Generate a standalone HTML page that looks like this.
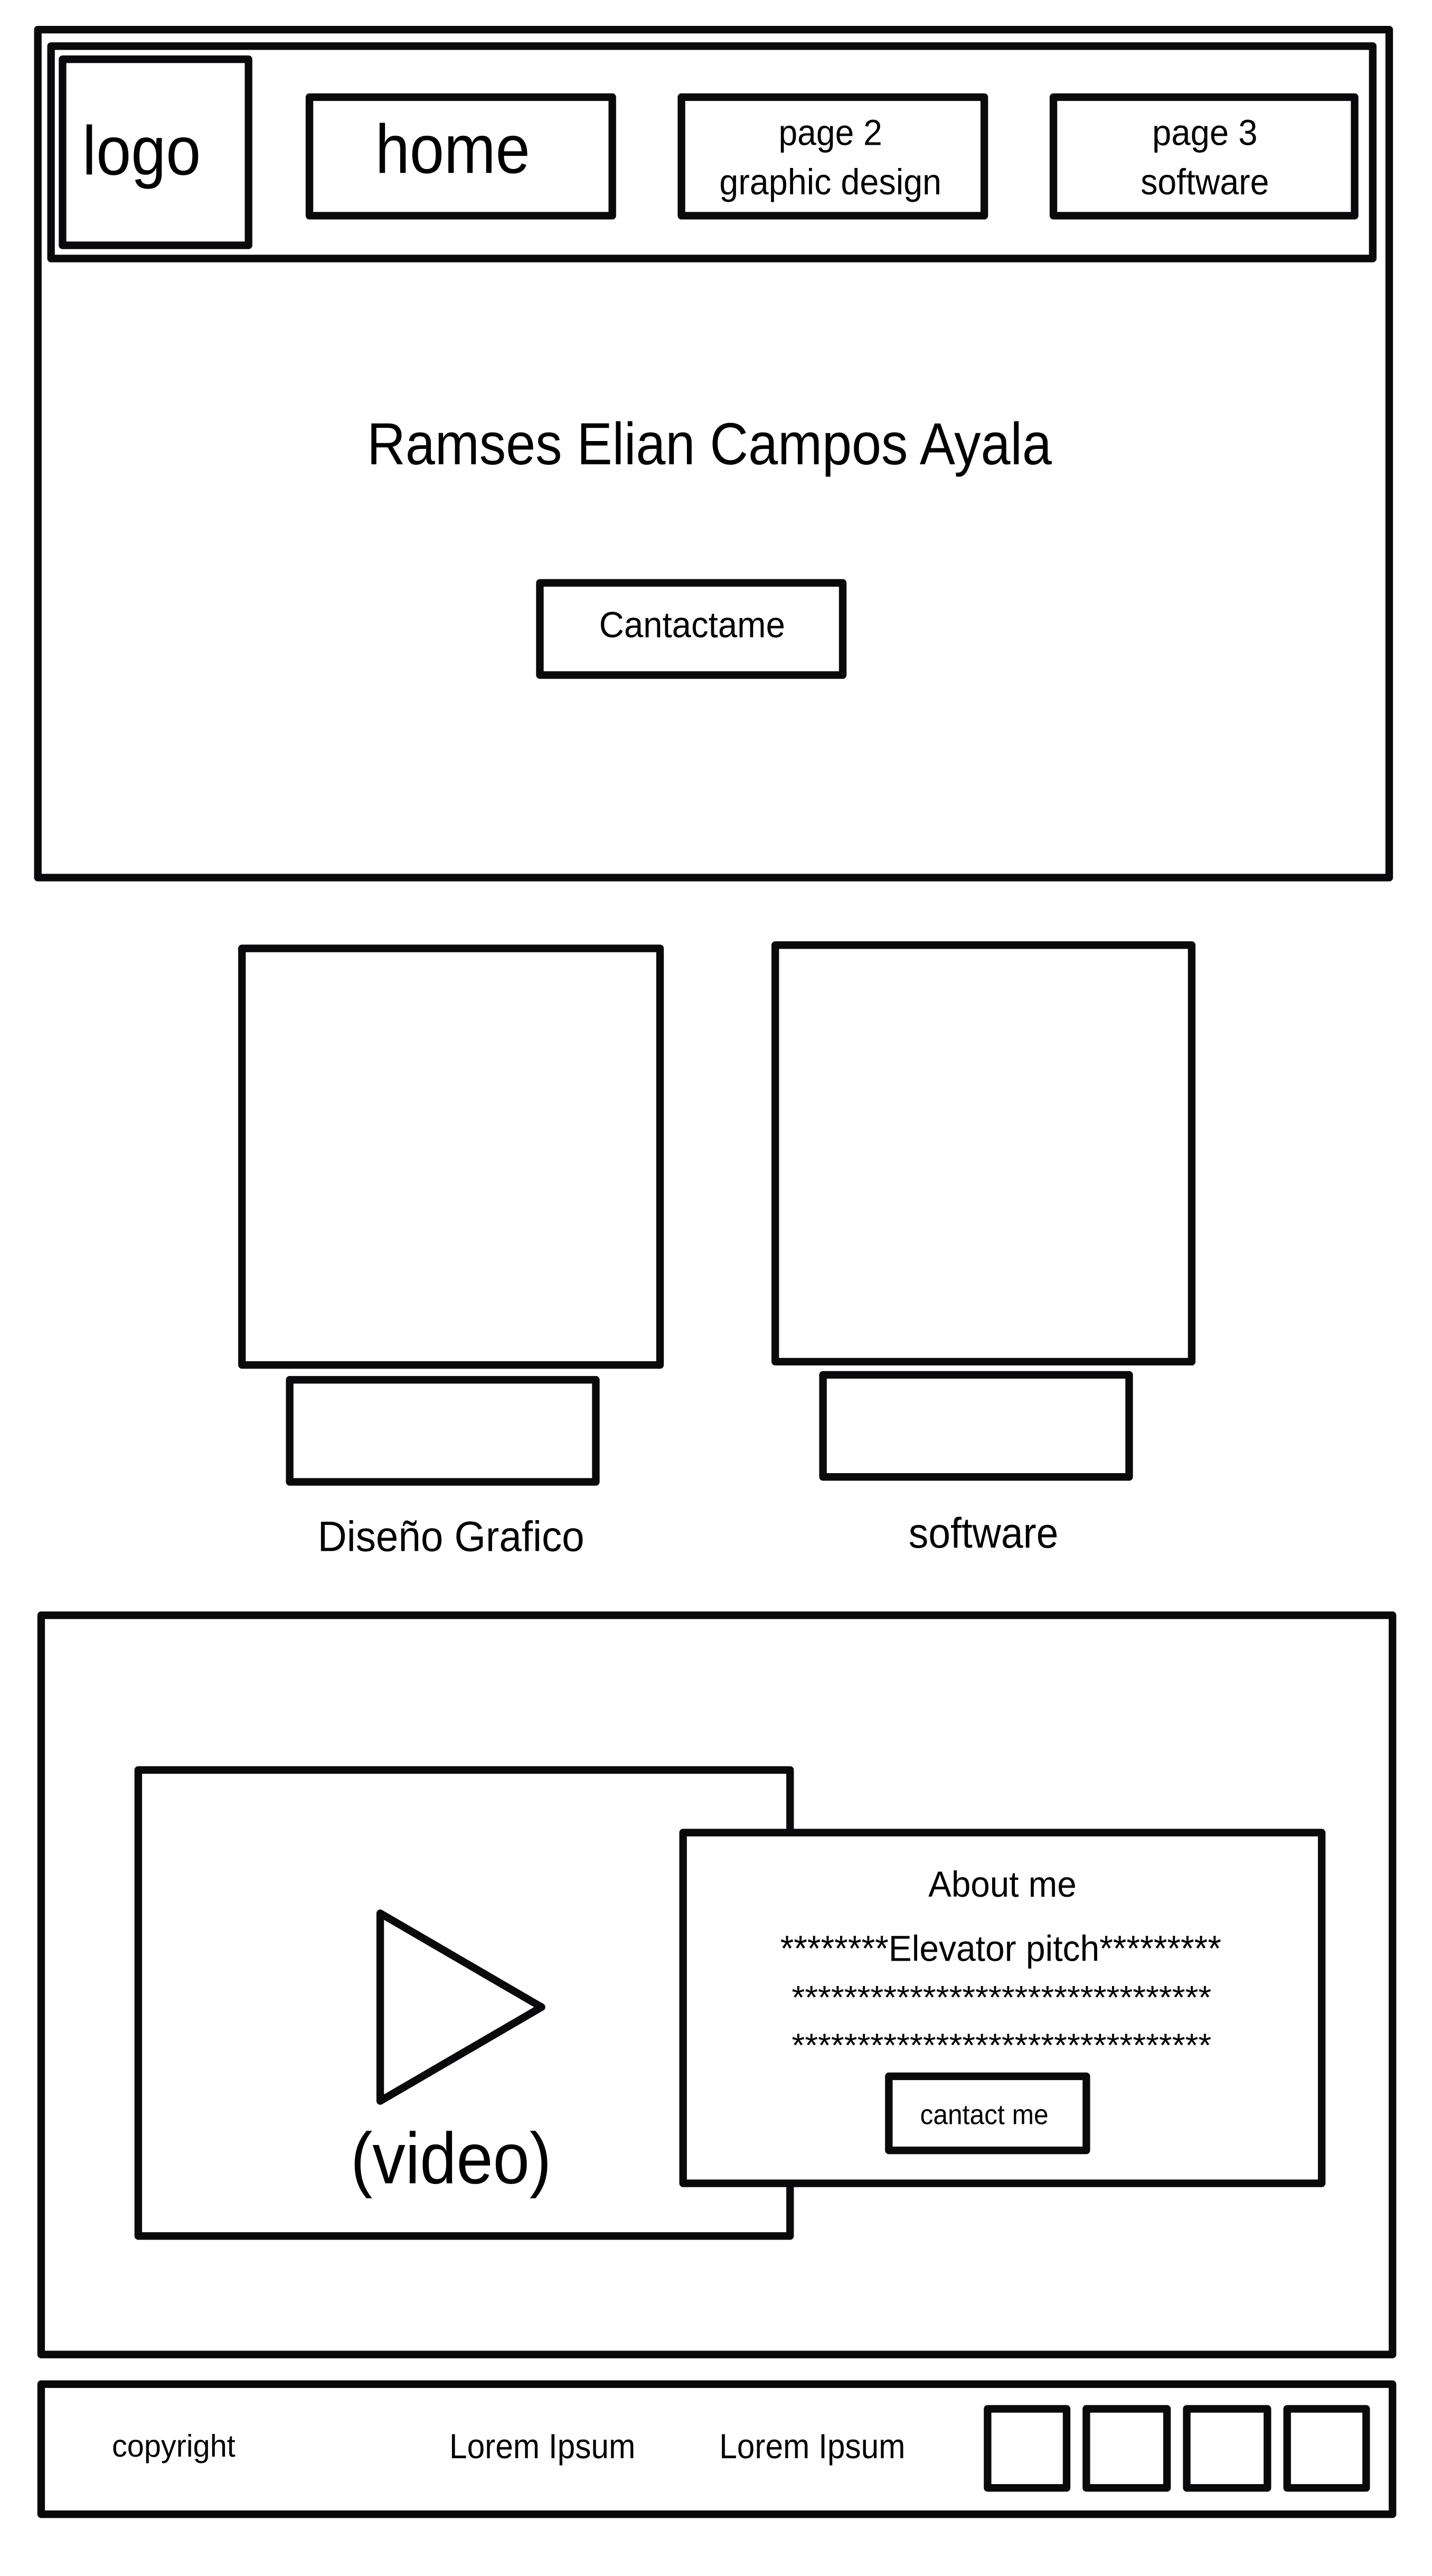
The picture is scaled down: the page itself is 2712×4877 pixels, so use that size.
<!DOCTYPE html>
<html><head><meta charset="utf-8">
<style>
html,body{margin:0;padding:0;background:#fff;}
svg{display:block;}
text{font-family:"Liberation Sans",sans-serif;fill:#000;}
</style></head>
<body>
<svg width="2712" height="4877" viewBox="0 0 870 1564.5" preserveAspectRatio="none" xmlns="http://www.w3.org/2000/svg">
<g fill="none" stroke="#0a090b" stroke-width="4.6" stroke-linejoin="round">
<rect x="23" y="18" width="821" height="515"/>
<rect x="31" y="28" width="803" height="129"/>
<rect x="38" y="36" width="113" height="113"/>
<rect x="188" y="59" width="184" height="72"/>
<rect x="414" y="59" width="184" height="72"/>
<rect x="640" y="59" width="183" height="72"/>
<rect x="328" y="354" width="184" height="56"/>
<rect x="147" y="576" width="254" height="253"/>
<rect x="176" y="838" width="186" height="62"/>
<rect x="471" y="574" width="253" height="253"/>
<rect x="500" y="835" width="186" height="62"/>
<rect x="25" y="981" width="821" height="449"/>
<rect x="84" y="1075" width="396" height="283"/>
<polygon points="231,1162 329,1219 231,1276"/>
<rect x="415" y="1113" width="388" height="213" fill="#fff"/>
<rect x="540" y="1261" width="120" height="45"/>
<rect x="25" y="1448" width="821" height="79"/>
<rect x="600" y="1463" width="48" height="48"/>
<rect x="660" y="1463" width="49" height="48"/>
<rect x="721" y="1463" width="49" height="48"/>
<rect x="782" y="1463" width="48" height="48"/>
</g>
<g lengthAdjust="spacingAndGlyphs">
<text x="50" y="106" font-size="42" textLength="72" lengthAdjust="spacingAndGlyphs">logo</text>
<text x="228" y="105" font-size="42" textLength="94" lengthAdjust="spacingAndGlyphs">home</text>
<text x="473" y="88" font-size="22" textLength="63" lengthAdjust="spacingAndGlyphs">page 2</text>
<text x="437" y="118" font-size="22" textLength="135" lengthAdjust="spacingAndGlyphs">graphic design</text>
<text x="700" y="88" font-size="22" textLength="64" lengthAdjust="spacingAndGlyphs">page 3</text>
<text x="693" y="118" font-size="22" textLength="78" lengthAdjust="spacingAndGlyphs">software</text>
<text x="223" y="282" font-size="36" textLength="416" lengthAdjust="spacingAndGlyphs">Ramses Elian Campos Ayala</text>
<text x="364" y="387" font-size="22" textLength="113" lengthAdjust="spacingAndGlyphs">Cantactame</text>
<text x="193" y="942" font-size="26" textLength="162" lengthAdjust="spacingAndGlyphs">Diseño Grafico</text>
<text x="552" y="940" font-size="26" textLength="91" lengthAdjust="spacingAndGlyphs">software</text>
<text x="213" y="1326" font-size="44" textLength="122" lengthAdjust="spacingAndGlyphs">(video)</text>
<text x="564" y="1152" font-size="22" textLength="90" lengthAdjust="spacingAndGlyphs">About me</text>
<text x="474" y="1191" font-size="22" textLength="268" lengthAdjust="spacingAndGlyphs">********Elevator pitch*********</text>
<text x="481" y="1220" font-size="20" textLength="255" lengthAdjust="spacingAndGlyphs">********************************</text>
<text x="481" y="1249" font-size="20" textLength="255" lengthAdjust="spacingAndGlyphs">********************************</text>
<text x="559" y="1290" font-size="17" textLength="78" lengthAdjust="spacingAndGlyphs">cantact me</text>
<text x="68" y="1492" font-size="19" textLength="75" lengthAdjust="spacingAndGlyphs">copyright</text>
<text x="273" y="1493" font-size="21" textLength="113" lengthAdjust="spacingAndGlyphs">Lorem Ipsum</text>
<text x="437" y="1493" font-size="21" textLength="113" lengthAdjust="spacingAndGlyphs">Lorem Ipsum</text>
</g>
</svg>
</body></html>
